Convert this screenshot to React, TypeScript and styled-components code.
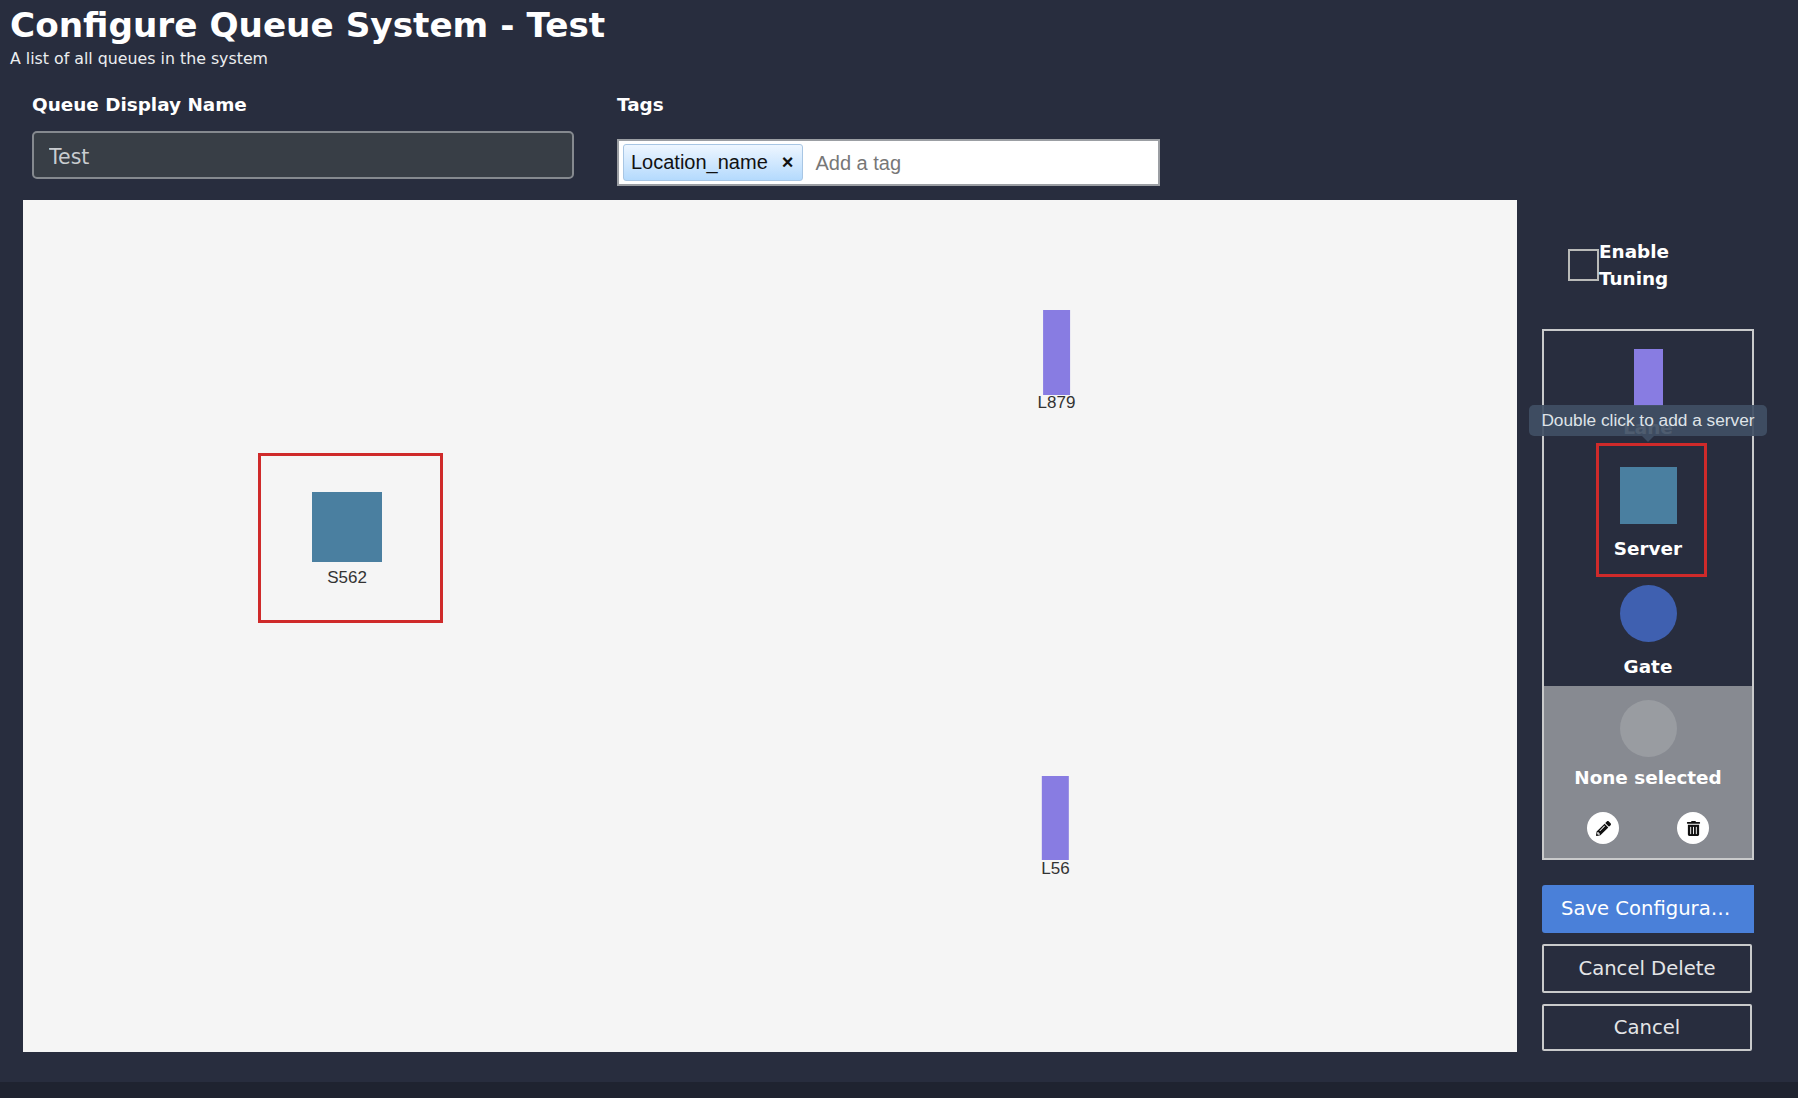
import { FunctionComponent } from "react";
import styled, { createGlobalStyle } from "styled-components";
import { FaPencilAlt, FaTrashAlt } from "react-icons/fa";

const colors = {
  page: "#282d3e",
  footer: "#1f2330",
  canvas: "#f5f5f5",
  lane: "#887ce2",
  server: "#4a7fa0",
  gate: "#3f60b0",
  red: "#cf2a2a",
  line: "#c9cacb",
};

const GlobalStyle = createGlobalStyle`
  html, body {
    margin: 0;
    padding: 0;
    background: ${colors.footer};
  }
  * {
    box-sizing: border-box;
  }
`;

const Page = styled.div`
  height: 1082px;
  background: ${colors.page};
  color: #fff;
  font-family: "DejaVu Sans", Verdana, sans-serif;
  overflow: hidden;
`;

const Footer = styled.div`
  height: 16px;
  background: ${colors.footer};
`;

const Header = styled.header`
  padding: 5px 10px 0;
`;

const Title = styled.h1`
  margin: 0;
  font-size: 34.25px;
  line-height: 40px;
  font-weight: 700;
`;

const Subtitle = styled.div`
  padding-top: 2px;
  font-size: 15.8px;
  line-height: 24px;
  color: #eceef0;
`;

const FormRow = styled.div`
  display: flex;
  gap: 43px;
  height: 129px;
  padding: 23px 0 0 32px;
`;

const Field = styled.div<{ $width: number }>`
  width: ${({ $width }) => $width}px;
`;

const FieldLabel = styled.div`
  margin-bottom: 15px;
  font-size: 18.4px;
  font-weight: 700;
  line-height: 22px;
`;

const NameInput = styled.input`
  display: block;
  width: 100%;
  height: 48px;
  padding: 3px 15px 0;
  border: 2px solid #85898f;
  border-radius: 5px;
  background: #383e46;
  color: #c9ccd0;
  font-family: inherit;
  font-size: 20.5px;
  outline: none;
`;

const TagBox = styled.div`
  display: flex;
  align-items: center;
  height: 47px;
  margin-top: 23px;
  padding: 0 4px;
  border: 2px solid #9b9ea3;
  background: #fff;
  font-family: "Liberation Sans", Arial, sans-serif;
  font-size: 20px;
`;

const Tag = styled.div`
  display: flex;
  align-items: center;
  gap: 14px;
  height: 37px;
  padding: 0 9px 0 7px;
  border: 1px solid #a8c6e4;
  border-radius: 3px;
  background: linear-gradient(#eef6ff, #b4dafd);
  color: #111;
`;

const TagRemove = styled.span`
  font-weight: 700;
  font-size: 20px;
`;

const TagPlaceholder = styled.span`
  margin: 2px 0 0 12px;
  color: #777;
`;

const Main = styled.div`
  display: flex;
  gap: 25px;
  padding-left: 23px;
`;

const Canvas = styled.div`
  position: relative;
  width: 1494px;
  height: 852px;
  background: ${colors.canvas};
  font-family: "Liberation Sans", Arial, sans-serif;
  color: #333;
`;

const Node = styled.div<{ $x: number; $y: number }>`
  position: absolute;
  left: ${({ $x }) => $x}px;
  top: ${({ $y }) => $y}px;
  transform: translateX(-50%);
  display: flex;
  flex-direction: column;
  align-items: center;
`;

const LaneShape = styled.div<{ $w?: number; $h?: number }>`
  width: ${({ $w = 27 }) => $w}px;
  height: ${({ $h = 85 }) => $h}px;
  background: ${colors.lane};
`;

const ServerShape = styled.div<{ $size: number }>`
  width: ${({ $size }) => $size}px;
  height: ${({ $size }) => $size}px;
  background: ${colors.server};
`;

const NodeLabel = styled.div<{ $gap?: number }>`
  margin-top: ${({ $gap = 0 }) => $gap}px;
  font-size: 17px;
  line-height: 16px;
`;

const Highlight = styled.div<{ $x: number; $y: number; $w: number; $h: number }>`
  position: absolute;
  left: ${({ $x }) => $x}px;
  top: ${({ $y }) => $y}px;
  width: ${({ $w }) => $w}px;
  height: ${({ $h }) => $h}px;
  border: 3px solid ${colors.red};
  pointer-events: none;
`;

const Sidebar = styled.aside`
  display: flex;
  flex-direction: column;
  width: 212px;
  padding-top: 38px;
`;

const TuningRow = styled.label`
  display: flex;
  align-items: flex-start;
  padding-left: 26px;
  font-size: 18.4px;
  font-weight: 700;
  line-height: 27px;
`;

const TuningBox = styled.input.attrs({ type: "checkbox" })`
  appearance: none;
  flex: none;
  width: 31px;
  height: 32px;
  margin: 11px 0 0;
  border: 2px solid #b9bab8;
  background: transparent;
`;

const Palette = styled.div`
  position: relative;
  margin-top: 37px;
  border: 2px solid ${colors.line};
`;

const PaletteItem = styled.div<{ $height?: number }>`
  display: flex;
  flex-direction: column;
  align-items: center;
  height: ${({ $height = 118 }) => $height}px;
`;

const LaneSlot = styled(PaletteItem)`
  height: 136px;
  padding-top: 18px;
`;

const ItemLabel = styled.div<{ $gap?: number }>`
  margin-top: ${({ $gap = 14 }) => $gap}px;
  font-size: 18.4px;
  font-weight: 700;
  line-height: 22px;
`;

const Circle = styled.div<{ $color: string }>`
  width: 57px;
  height: 57px;
  border-radius: 50%;
  background: ${({ $color }) => $color};
`;

const Selection = styled.div`
  display: flex;
  flex-direction: column;
  align-items: center;
  padding: 14px 0 14px;
  background: #878a91;
`;

const IconRow = styled.div`
  display: flex;
  gap: 58px;
  margin-top: 23px;
`;

const IconButton = styled.button`
  display: flex;
  align-items: center;
  justify-content: center;
  width: 32px;
  height: 32px;
  padding: 0;
  border: none;
  border-radius: 50%;
  background: #fff;
  color: #111;
  font-size: 15px;
`;

const Tooltip = styled.div`
  position: absolute;
  left: -15px;
  top: 74px;
  width: 238px;
  height: 31px;
  border-radius: 5px;
  background: rgba(64, 79, 100, 0.92);
  color: #dfe3e8;
  font-family: "Liberation Sans", Arial, sans-serif;
  font-size: 17.3px;
  line-height: 31px;
  text-align: center;
  white-space: nowrap;

  &::after {
    content: "";
    position: absolute;
    left: 113px;
    top: 31px;
    border-left: 6px solid transparent;
    border-right: 6px solid transparent;
    border-top: 6px solid rgba(64, 79, 100, 0.92);
  }
`;

const Actions = styled.div`
  display: flex;
  flex-direction: column;
  gap: 11px;
  margin-top: 25px;
`;

const ActionButton = styled.button<{ $primary?: boolean; $height: number }>`
  display: block;
  width: ${({ $primary }) => ($primary ? 212 : 210)}px;
  height: ${({ $height }) => $height}px;
  padding: ${({ $primary }) => ($primary ? "0 19px 2px" : "0 19px")};
  border: ${({ $primary }) => ($primary ? "none" : `2px solid ${colors.line}`)};
  border-radius: ${({ $primary }) => ($primary ? "3px 0 0 3px" : "2px")};
  background: ${({ $primary }) => ($primary ? "#4a80d9" : "transparent")};
  color: ${({ $primary }) => ($primary ? "#fff" : "#e4e5e7")};
  font-family: inherit;
  font-size: 19.6px;
  text-align: ${({ $primary }) => ($primary ? "left" : "center")};
  white-space: nowrap;
  overflow: hidden;
  text-overflow: ellipsis;
`;

const App: FunctionComponent = () => {
  return (
    <>
      <GlobalStyle />
      <Page>
        <Header>
          <Title>Configure Queue System - Test</Title>
          <Subtitle>A list of all queues in the system</Subtitle>
        </Header>
        <FormRow>
          <Field $width={542}>
            <FieldLabel>Queue Display Name</FieldLabel>
            <NameInput defaultValue="Test" />
          </Field>
          <Field $width={543}>
            <FieldLabel>Tags</FieldLabel>
            <TagBox>
              <Tag>
                Location_name
                <TagRemove>×</TagRemove>
              </Tag>
              <TagPlaceholder>Add a tag</TagPlaceholder>
            </TagBox>
          </Field>
        </FormRow>
        <Main>
          <Canvas>
            <Node $x={1033.5} $y={110}>
              <LaneShape />
              <NodeLabel>L879</NodeLabel>
            </Node>
            <Node $x={1032.5} $y={576}>
              <LaneShape $h={84} />
              <NodeLabel $gap={1}>L56</NodeLabel>
            </Node>
            <Node $x={324} $y={292}>
              <ServerShape $size={70} />
              <NodeLabel $gap={8}>S562</NodeLabel>
            </Node>
            <Highlight $x={235} $y={253} $w={185} $h={170} />
          </Canvas>
          <Sidebar>
            <TuningRow>
              <TuningBox />
              <span>
                Enable
                <br />
                Tuning
              </span>
            </TuningRow>
            <Palette>
              <LaneSlot>
                <LaneShape $w={29} $h={57} />
                <ItemLabel $gap={11}>Lane</ItemLabel>
              </LaneSlot>
              <PaletteItem>
                <ServerShape $size={57} />
                <ItemLabel>Server</ItemLabel>
              </PaletteItem>
              <PaletteItem $height={101}>
                <Circle $color={colors.gate} />
                <ItemLabel>Gate</ItemLabel>
              </PaletteItem>
              <Selection>
                <Circle $color="#999ca1" />
                <ItemLabel $gap={10}>None selected</ItemLabel>
                <IconRow>
                  <IconButton aria-label="Edit">
                    <FaPencilAlt />
                  </IconButton>
                  <IconButton aria-label="Delete">
                    <FaTrashAlt />
                  </IconButton>
                </IconRow>
              </Selection>
              <Tooltip>Double click to add a server</Tooltip>
              <Highlight $x={52} $y={112} $w={111} $h={134} />
            </Palette>
            <Actions>
              <ActionButton $primary $height={48}>Save Configuration</ActionButton>
              <ActionButton $height={49}>Cancel Delete</ActionButton>
              <ActionButton $height={47}>Cancel</ActionButton>
            </Actions>
          </Sidebar>
        </Main>
      </Page>
      <Footer />
    </>
  );
};

export default App;
